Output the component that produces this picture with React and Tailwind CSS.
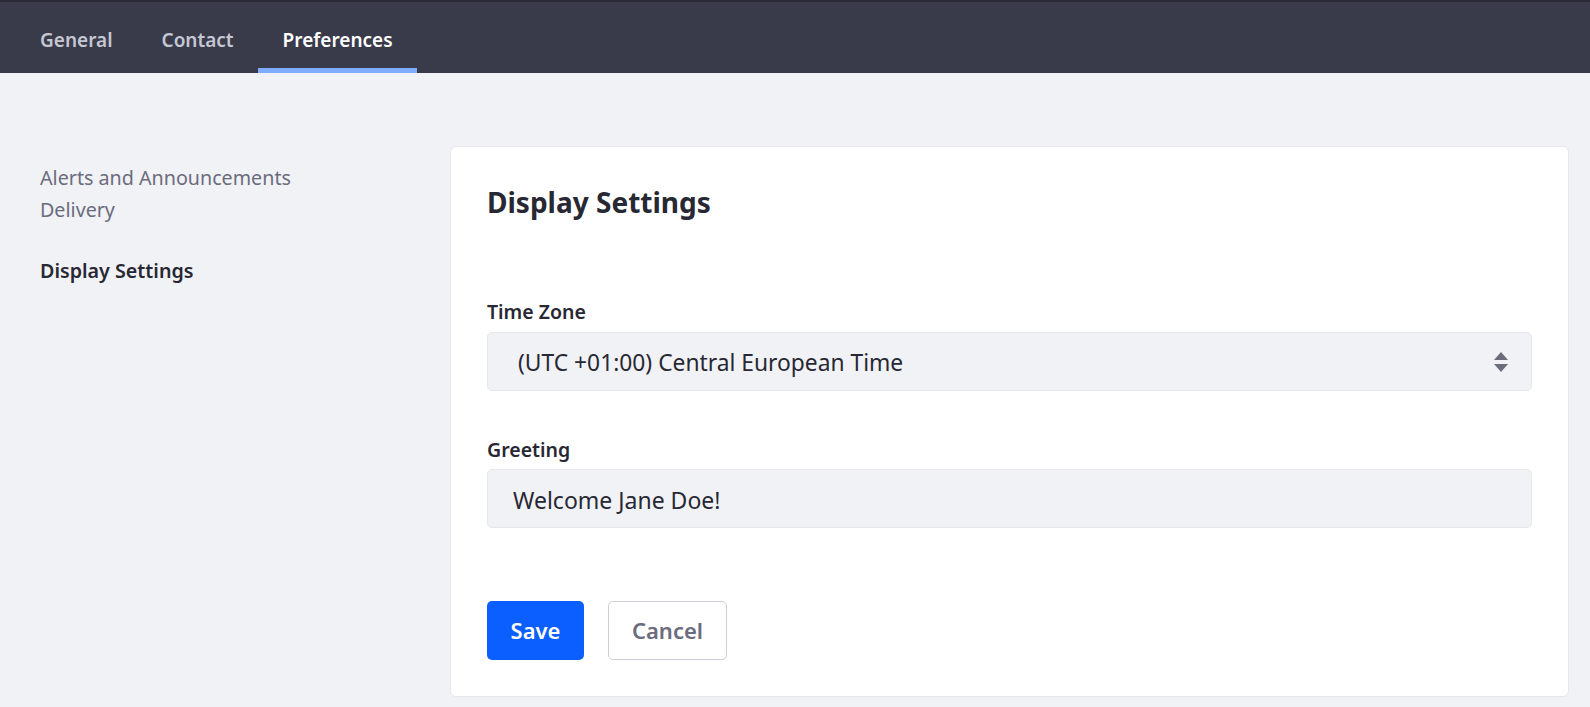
import React from "react";

const font = { fontFamily: '"Noto Sans", "Open Sans", sans-serif' };

function Tab({ label, active }) {
  return (
    <div className="relative flex h-full items-center px-[24.5px] pt-[4px]">
      <span
        className={
          "text-[19px] font-semibold leading-[24px] " +
          (active ? "text-white" : "text-[#c5c7d3]")
        }
      >
        {label}
      </span>
      {active && (
        <div className="absolute bottom-0 left-0 right-0 h-[5px] bg-[#80acff]" />
      )}
    </div>
  );
}

function SelectArrows() {
  return (
    <svg width="14" height="20" viewBox="0 0 14 20" className="shrink-0">
      <polygon points="0,8 7,0 14,8" fill="#6b6c7e" />
      <polygon points="0,12 14,12 7,20" fill="#6b6c7e" />
    </svg>
  );
}

export default function App() {
  return (
    <div className="min-h-[707px] w-full bg-[#f1f2f5]" style={font}>
      <div className="border-t-[2px] border-[#2b2c38] bg-[#393a4a]">
        <nav className="flex h-[71px] items-stretch pl-[15.5px]">
          <Tab label="General" />
          <Tab label="Contact" />
          <Tab label="Preferences" active />
        </nav>
      </div>

      <div className="flex pl-[40px] pr-[21px] pt-[73px]">
        <aside className="w-[410px] shrink-0 pt-[16px]">
          <div className="w-[270px] text-[19.7px] leading-[32px] text-[#6b6c7e]">
            Alerts and Announcements Delivery
          </div>
          <div className="mt-[29px] text-[19.7px] font-semibold leading-[32px] text-[#272833]">
            Display Settings
          </div>
        </aside>

        <main className="flex-1 rounded-[6px] border border-[#e7e7ed] bg-white px-[36px] pb-[36px] pt-[37px]">
          <h2 className="text-[28px] font-bold leading-[36px] text-[#272833]">
            Display Settings
          </h2>

          <label className="mt-[80px] block text-[19.5px] font-semibold leading-[24px] text-[#272833]">
            Time Zone
          </label>
          <div className="mt-[8px] flex h-[59px] items-center justify-between rounded-[5px] border border-[#e7e7ed] bg-[#f1f2f5] pl-[30px] pr-[23px]">
            <span className="pt-[2px] text-[22.8px] leading-[30px] text-[#272833]">
              (UTC +01:00) Central European Time
            </span>
            <SelectArrows />
          </div>

          <label className="mt-[47px] block text-[19.5px] font-semibold leading-[24px] text-[#272833]">
            Greeting
          </label>
          <div className="mt-[7px] flex h-[59px] items-center rounded-[5px] border border-[#e7e7ed] bg-[#f1f2f5] pl-[25px]">
            <span className="pt-[2px] text-[23px] leading-[30px] text-[#272833]">
              Welcome Jane Doe!
            </span>
          </div>

          <div className="mt-[73px] flex gap-[24px]">
            <button className="flex h-[59px] w-[97px] items-center justify-center rounded-[5px] bg-[#0b5fff] text-[22px] font-semibold text-white">
              Save
            </button>
            <button className="flex h-[59px] w-[119px] items-center justify-center rounded-[5px] border border-[#cdced9] bg-white text-[22px] font-semibold text-[#6b6c7e]">
              Cancel
            </button>
          </div>
        </main>
      </div>
    </div>
  );
}
